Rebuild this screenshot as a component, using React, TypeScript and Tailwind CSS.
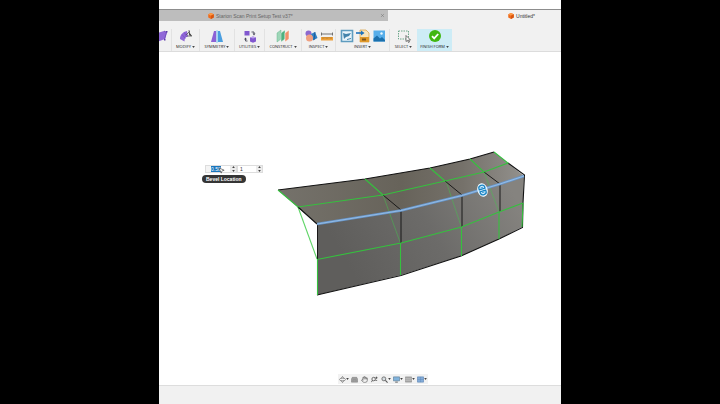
import type { ReactNode } from "react";
import { Hand, MousePointer2, X } from "lucide-react";

type Tool = { label: string; width: string; icons: ReactNode; active?: boolean };

const Caret = ({ className = "" }: { className?: string }) => (
  <svg viewBox="0 0 4 3" className={`h-[2px] w-[3px] shrink-0 ${className}`} aria-hidden="true">
    <path d="M0 0h4L2 3z" fill="#444" />
  </svg>
);

const Cube = () => (
  <svg viewBox="0 0 12 12" className="h-[6px] w-[6px] shrink-0" aria-hidden="true">
    <path d="M6 0l5.5 2.6v6.2L6 12 .5 8.8V2.6z" fill="#ee6b1c" />
    <path d="M6 0l5.5 2.6L6 5.4.5 2.6z" fill="#ff9b45" />
    <path d="M6 5.4l5.5-2.8v6.2L6 12z" fill="#d9560f" />
  </svg>
);

const icon = "h-[14px] w-[14px] shrink-0";

const CreateIcon = () => (
  <svg viewBox="0 0 14 14" className={icon} aria-hidden="true">
    <path d="M3 4l7-2 3 1-2 7-8 3z" fill="#9068d8" />
    <path d="M10 2l2.500 1.500-2 7" fill="none" stroke="#6a45b8" strokeWidth=".8" />
    <path d="M12 2h1.500v1.500H12zM10 10h1.500v1.500H10z" fill="#5c3aa6" />
  </svg>
);

const ModifyIcon = () => (
  <svg viewBox="0 0 14 14" className={icon} aria-hidden="true">
    <path d="M1 10c0-4 2.500-7 7-8l1 5.500c-2.500.5-3.500 2-3.500 5z" fill="#9068d8" />
    <path d="M3 5.500l3.500 4M5.500 3.500l2 4.500" stroke="#6d48bd" strokeWidth=".6" />
    <path d="M7 6l4-4M10 1l.5 5M8 7h5" stroke="#555" strokeWidth=".8" />
    <path d="M10 3l3 4-2.500-.5z" fill="#333" />
  </svg>
);

const SymmetryIcon = () => (
  <svg viewBox="0 0 14 14" className={icon} aria-hidden="true">
    <path d="M4 2h2.400v11H1z" fill="#8c62d6" />
    <path d="M7.600 2H10l3 11H7.600z" fill="#4a9ee0" />
    <path d="M7 1v13" stroke="#9edcf4" strokeWidth="1.200" />
  </svg>
);

const UtilitiesIcon = () => (
  <svg viewBox="0 0 14 14" className={icon} aria-hidden="true">
    <path d="M1.500 2h5v4.500h-5z" fill="#8158cf" />
    <path d="M7 8.500l3-1 3 1v4l-3 1.200-3-1.200z" fill="#8158cf" />
    <path d="M7 8.500l3 1 3-1-3-1z" fill="#bca2ee" />
    <path d="M8.500 3H11v2M4.500 12H2.500V10" fill="none" stroke="#4b4b5a" strokeWidth=".9" />
    <path d="M9.500 4.500h3L11 6.500zM1 10.500h3L2.500 8.500z" fill="#4b4b5a" />
  </svg>
);

const ConstructIcon = () => (
  <svg viewBox="0 0 14 14" className={icon} aria-hidden="true">
    <path d="M1 4l4-3v9l-4 3z" fill="#9ed6b8" stroke="#55ad80" strokeWidth=".4" />
    <path d="M5 4l4-3v9l-4 3z" fill="#4eb07f" stroke="#e9f6ef" strokeWidth=".5" />
    <path d="M9 4l4-3v9l-4 3z" fill="#f0916a" stroke="#fff" strokeWidth=".5" />
  </svg>
);

const InspectIcon = () => (
  <svg viewBox="0 0 14 14" className={icon} aria-hidden="true">
    <circle cx="4.500" cy="4.500" r="3" fill="#8c68cf" />
    <path d="M7 5l4-2 2.500 6-4.500 2.500z" fill="#2e7fc4" />
    <circle cx="5.500" cy="9" r="3.500" fill="#f0a080" />
    <path d="M11 3l-1 8" stroke="#174f86" strokeWidth=".7" />
  </svg>
);

const MeasureIcon = () => (
  <svg viewBox="0 0 14 14" className={icon} aria-hidden="true">
    <path d="M1.500 5h11M1.500 3.500v3M12.500 3.500v3" stroke="#555" strokeWidth=".8" />
    <path d="M1 8h12v3.500H1z" fill="#eda13c" />
    <path d="M3 8v2M5 8v1.500M7 8v2M9 8v1.500M11 8v2" stroke="#9b651c" strokeWidth=".6" />
  </svg>
);

const DecalIcon = () => (
  <svg viewBox="0 0 14 14" className={icon} aria-hidden="true">
    <path d="M1.500 1.500h11v11h-11z" fill="#eaf5fb" stroke="#5e9cbf" strokeWidth="1.600" />
    <path d="M3 4l3 1 5-1-2 3-3 1-2 2z" fill="#4383ab" />
    <path d="M7 10.500l4-1" stroke="#4383ab" />
  </svg>
);

const InsertIcon = () => (
  <svg viewBox="0 0 14 14" className={icon} aria-hidden="true">
    <path d="M4 1h6l3 3v9H4z" fill="#f8e4bb" stroke="#d89d3c" strokeWidth=".7" />
    <path d="M4 8h9v5H4z" fill="#e19a29" />
    <path d="M6 9.500h4v2H6z" fill="#80551a" />
    <path d="M0 4h5" stroke="#1d72bd" strokeWidth="1.600" />
    <path d="M5 1.500L8.500 4 5 6.500z" fill="#1d72bd" />
  </svg>
);

const CanvasIcon = () => (
  <svg viewBox="0 0 14 14" className={icon} aria-hidden="true">
    <path d="M1.500 1.500h11.500v11H1.500z" fill="#57aeea" />
    <path d="M1.500 9.500l3.500-3 3 3 2-1.500 3 3v1.500H1.500z" fill="#1b70ad" />
    <circle cx="9.500" cy="4.500" r="1.200" fill="#e9f8ff" />
  </svg>
);

const SelectIcon = () => (
  <svg viewBox="0 0 14 14" className={icon} aria-hidden="true">
    <path d="M1.500 2h10v8h-10z" fill="none" stroke="#5f9f80" strokeWidth=".9" strokeDasharray="1.500 1" />
    <path d="M9 6.500v6l1.500-1.200 1 2.200 1-.5-1-2h2z" fill="#fff" stroke="#444" strokeWidth=".7" />
  </svg>
);

const FinishIcon = () => (
  <svg viewBox="0 0 14 14" className={icon} aria-hidden="true">
    <circle cx="7" cy="7" r="6" fill="#41b712" />
    <path d="M4 7.200l2.200 2.200 4-4.400" fill="none" stroke="#fff" strokeWidth="1.800" />
  </svg>
);

const tools: Tool[] = [
  { label: "MODIFY", width: "w-[28px]", icons: <ModifyIcon /> },
  { label: "SYMMETRY", width: "w-[35px]", icons: <SymmetryIcon /> },
  { label: "UTILITIES", width: "w-[30px]", icons: <UtilitiesIcon /> },
  { label: "CONSTRUCT", width: "w-[37px]", icons: <ConstructIcon /> },
  { label: "INSPECT", width: "w-[34px]", icons: <><InspectIcon /><MeasureIcon /></> },
  { label: "INSERT", width: "w-[54px]", icons: <><DecalIcon /><InsertIcon /><CanvasIcon /></> },
  { label: "SELECT", width: "w-[28px]", icons: <SelectIcon /> },
  { label: "FINISH FORM", width: "w-[35px]", icons: <FinishIcon />, active: true },
];

const Tabs = () => (
  <nav className="flex h-[12px] border-t border-[#8d8d8d] bg-[#f1f1f1] font-['Liberation_Sans',sans-serif] text-[5px] leading-[6px]" aria-label="Documents">
    <div className="flex w-[57%] shrink-0 items-center bg-[#bdbdbd] px-[3px]">
      <a href="#scan" className="flex flex-1 items-center gap-[2px] pl-[46px] text-[#666]">
        <Cube />
        Starion Scan Print Setup Test v37*
      </a>
      <button aria-label="Close tab">
        <X className="h-[5px] w-[5px] text-[#666]" />
      </button>
    </div>
    <a href="#untitled" className="flex flex-1 items-center justify-end gap-[2px] pr-[26px] text-[#333]">
      <Cube />
      Untitled*
    </a>
  </nav>
);

const Toolbar = () => (
  <div className="flex h-[31px] overflow-hidden border-b border-[#dcdcdc] bg-[#f1f1f1] pt-[8px]" role="toolbar" aria-label="Form tools">
    <button className="flex w-[12px] shrink-0 justify-end overflow-hidden pr-[3px]" aria-label="Create">
      <CreateIcon />
    </button>
    {tools.map(({ label, width, icons, active }) => (
      <button
        key={label}
        className={`flex shrink-0 flex-col items-center gap-[1px] ${width} ${active ? "bg-[#cdecf6]" : "border-l border-[#e2e2e2]"}`}
      >
        <span className="flex gap-[2px]">{icons}</span>
        <span className="flex items-center gap-[1px] whitespace-nowrap text-[4px] leading-[6px] text-[#222]">
          {label}
          <Caret />
        </span>
      </button>
    ))}
  </div>
);

const Model = () => (
  <svg viewBox="270 145 260 155" className="absolute top-[93px] left-[111px] w-[260px]" role="img" aria-label="Curved form body">
    <defs>
      <linearGradient id="top" x1="0" x2="1">
        <stop offset="0" stopColor="#75726b" />
        <stop offset=".5" stopColor="#67635a" />
        <stop offset=".75" stopColor="#75716a" />
        <stop offset="1" stopColor="#93918d" />
      </linearGradient>
      <linearGradient id="front" x1="0" x2=".9" y1=".3" y2="0">
        <stop offset="0" stopColor="#5f5e5c" />
        <stop offset=".5" stopColor="#6c6b69" />
        <stop offset="1" stopColor="#85837f" />
      </linearGradient>
    </defs>
    <path d="M278 190L365 179 430 168 470 159 494 152 524 176 500 184 462 195 401 210 317 224z" fill="url(#top)" />
    <path d="M317 224L401 210 462 195 500 184 524 176 522 227 499 239 461 256 401 275 317 295z" fill="url(#front)" />
    <g fill="none" stroke="#42c64b" strokeWidth=".8" opacity=".6">
      <path d="M383 195L400 242M446 181L461 226M484 172L499 212" />
    </g>
    <path d="M298 207L317 259" stroke="#5fd566" strokeWidth="1.100" />
    <g fill="none" stroke="#111" strokeWidth="1.100">
      <path d="M278 190L365 179 430 168 470 159 494 152M508 163L524.500 175 523 203M298 207L317 224M317 295L401 275.500 461 256 499 239 522.500 227.500 523 203" />
      <path d="M317.500 224V259M383 195L401 210V243M445 181L462 195V227M484 172L500 184V212" strokeWidth=".9" />
    </g>
    <g fill="none" stroke="#35c13e" strokeWidth="1.100">
      <path d="M278 190L298 207 383 195 445 181 484 172 508 163 494 152" />
      <path d="M365 179L383 195M430 168L445 181M470 159L484 172" />
      <path d="M317 259.500L401 243 461.500 227 499 212 523 203" />
      <path d="M317.500 259V295M400.500 243V275M461.500 227V256M499 212V239M523 203L522 227" />
    </g>
    <g fill="none">
      <path d="M317 224L401 210.500 462 195.500 500 184 524 176" stroke="#6795c9" strokeWidth="2.600" />
      <path d="M317 224L401 210.500 462 195.500 500 184 524 176" stroke="#93bbe5" strokeWidth="1.200" />
    </g>
    <g transform="rotate(-18 482.500 190)" stroke="#1683c4">
      <ellipse cx="482.500" cy="190" rx="4.600" ry="6.400" fill="#e8f7ff" stroke="#e8f7ff" strokeWidth="1" />
      <path d="M479.500 189v-1.200c0-3.600 6-3.600 6 0v1.200zM479.500 191v1.200c0 3.600 6 3.600 6 0V191z" fill="#d5efff" strokeWidth="1.300" />
      <path d="M481.200 187.500h2.600M481.200 192.500h2.600" strokeWidth=".7" />
    </g>
  </svg>
);

const Spinner = () => (
  <span className="flex w-[6px] shrink-0 flex-col items-center justify-center gap-[2px] bg-[#ececec]">
    <Caret className="rotate-180" />
    <Caret />
  </span>
);

const BevelInput = () => (
  <div className="absolute top-[113px] left-[43px] flex flex-col items-start gap-[2px] font-['Liberation_Sans',sans-serif]">
    <div className="ml-[3px] flex h-[8px] text-[5px] leading-[6px]">
      <label className="flex w-[32px] border border-[#ddd] bg-[#f4f4f4] pl-[5px]">
        <input aria-label="Bevel Location" defaultValue="0.50" className="w-[10px] bg-[#1976bd] text-white" />
        <span className="flex-1 bg-white" />
        <Spinner />
      </label>
      <label className="flex w-[26px] border border-[#ddd] bg-white pl-[2px]">
        <input aria-label="Segments" defaultValue="1" className="min-w-0 flex-1 text-[#333]" />
        <Spinner />
      </label>
    </div>
    <span role="tooltip" className="rounded-full bg-[#353535] px-[4px] text-[5px] leading-[8px] font-bold whitespace-nowrap text-white">
      Bevel Location
    </span>
    <MousePointer2 className="absolute top-[2px] left-[16px] h-[7px] w-[7px] fill-white text-[#333]" />
  </div>
);

const small = "h-[7px] w-[7px] shrink-0";

const views = [
  {
    label: "Orbit",
    menu: true,
    art: (
      <svg viewBox="0 0 16 16" className={small} fill="none" stroke="#666" strokeWidth="1.500">
        <ellipse cx="8" cy="8" rx="7" ry="3" />
        <path d="M8 1l3 4M8 1L5 5M8 15l3-4M8 15l-3-4" />
      </svg>
    ),
  },
  {
    label: "Look at",
    art: (
      <svg viewBox="0 0 16 16" className={small}>
        <path d="M3 3h10l2 4v7H1V7z" fill="#aaa" stroke="#666" />
        <path d="M3 7h10M4 10h8v2H4z" fill="#eee" stroke="#666" />
      </svg>
    ),
  },
  { label: "Pan", art: <Hand className={`${small} text-[#555]`} /> },
  {
    label: "Zoom",
    art: (
      <svg viewBox="0 0 16 16" className={small} fill="none" stroke="#444" strokeWidth="1.700">
        <circle cx="6" cy="7" r="4" />
        <path d="M3 10l-2 4M10 4h5M12.500 1.500v5M10 10h4" />
      </svg>
    ),
  },
  {
    label: "Fit",
    menu: true,
    art: (
      <svg viewBox="0 0 16 16" className={small} fill="none" stroke="#555" strokeWidth="1.700">
        <circle cx="6.500" cy="6.500" r="4.500" fill="#d7dee2" />
        <path d="M10 10l5 5" strokeWidth="2.500" />
      </svg>
    ),
  },
  {
    label: "Display settings",
    menu: true,
    art: (
      <svg viewBox="0 0 16 16" className={small}>
        <path d="M1 2h14v9H1z" fill="#81b3dc" stroke="#5d7f99" strokeWidth="1.500" />
        <path d="M5 14h6" stroke="#555" strokeWidth="2" />
      </svg>
    ),
  },
  {
    label: "Grid and snaps",
    menu: true,
    art: (
      <svg viewBox="0 0 16 16" className={small}>
        <path d="M1 2h14v12H1z" fill="#aaa" stroke="#777" />
        <path d="M1 6h14M1 10h14" stroke="#ccc" />
      </svg>
    ),
  },
  {
    label: "Viewports",
    menu: true,
    art: (
      <svg viewBox="0 0 16 16" className={small}>
        <path d="M1 2h14v12H1z" fill="#83acd9" stroke="#5f87b5" strokeWidth="1.500" />
        <path d="M8 2v12M1 8h14" stroke="#5f87b5" />
      </svg>
    ),
  },
];

const ViewBar = () => (
  <div className="mb-[1px] flex h-[10px] items-center gap-[2px] bg-[#f2f2f2] px-[1px]" role="toolbar" aria-label="Navigation">
    {views.map(({ label, menu, art }) => (
      <button key={label} aria-label={label} className="flex items-center pr-[1px]">
        {art}
        {menu && <Caret className="-mr-[1px]" />}
      </button>
    ))}
  </div>
);

export default function App() {
  return (
    <div className="flex min-h-screen bg-black px-[159px] font-['Open_Sans',sans-serif]">
      <div className="flex min-w-0 flex-1 flex-col bg-white pt-[9px]">
        <Tabs />
        <Toolbar />
        <main className="relative flex flex-1 items-end justify-center overflow-hidden pl-[46px]">
          <Model />
          <BevelInput />
          <ViewBar />
        </main>
        <footer className="h-[19px] border-t border-[#ddd] bg-[#f1f1f1]" />
      </div>
    </div>
  );
}
